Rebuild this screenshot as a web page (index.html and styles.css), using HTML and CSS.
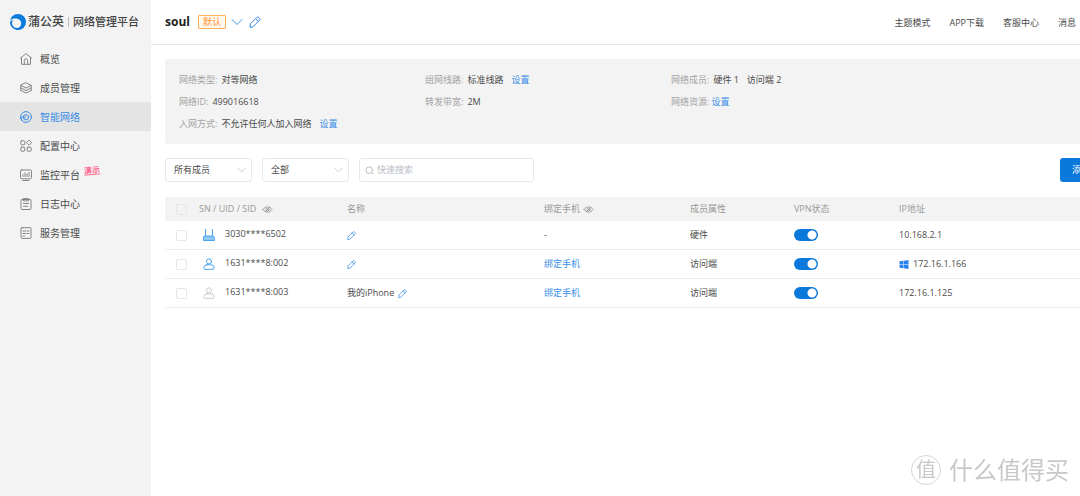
FILE: index.html
```html
<!DOCTYPE html>
<html lang="zh-CN">
<head>
<meta charset="utf-8">
<title>蒲公英 网络管理平台</title>
<link rel="stylesheet" href="styles.css">
</head>
<body>
<svg class="defs" width="0" height="0" aria-hidden="true">
  <symbol id="pencil" viewBox="0 0 12 12"><path d="M1 11l.4-3.200L7.700 1.500a1.500 1.500 0 0 1 2.200 0l.6.6a1.500 1.500 0 0 1 0 2.200L4.200 10.600zM6.700 2.500l2.800 2.800"/></symbol>
  <symbol id="chevron" viewBox="0 0 12 8"><path d="M1 1.500l5 5 5-5"/></symbol>
  <symbol id="user" viewBox="0 0 12 12"><circle cx="6" cy="3.400" r="2.600"/><path d="M3.900 6.800h4.200a3 3 0 0 1 3 3v.7a.8.8 0 0 1-.8.8H1.700a.8.8 0 0 1-.8-.8v-.7a3 3 0 0 1 3-3z"/></symbol>
  <symbol id="eye" viewBox="0 0 12 10"><path d="M1 5c2.500-4 7.500-4 10 0-2.500 4-7.500 4-10 0z"/><circle cx="6" cy="5" r="1.700"/><path d="M3.500 7.500l5-5"/></symbol>
</svg>
<div class="app">
  <aside class="sidebar">
    <div class="brand">
      <svg class="brand-mark" viewBox="0 0 16 16"><circle cx="8" cy="8" r="8" fill="#0c7bdc"/><path d="M0 6.500C1.500 4.800 4 4.300 6.500 4.500a5 5 0 0 1 4.700 5c0 2.800-2 4.700-4.700 4.500L5.500 16H0z" fill="#f3f3f3"/><path d="M.2 7.800c.7-1.300 2-1.800 3.300-1.500C2.200 7.200 1.700 8.800 2.200 10.500c.6 2 2.300 3.300 4.800 3.500l1 2C3.500 16-.5 12.300.2 7.800z" fill="#0c7bdc"/></svg>
      <span class="brand-name">蒲公英</span>
      <span class="brand-sub">网络管理平台</span>
    </div>
    <nav class="menu">
      <a href="#"><svg class="icon" viewBox="0 0 12 12"><path d="M.5 5L6 .7 11.500 5M1.500 4.500v6.800h9V4.500M4.300 11V7.500a1.700 1.700 0 0 1 3.400 0V11"/></svg>概览</a>
      <a href="#"><svg class="icon" viewBox="0 0 12 12"><path d="M6 .8l5.200 2.600L6 6 .8 3.400zM.8 5.900L6 8.500l5.200-2.600M.8 8.400L6 11l5.200-2.600M.8 3.400v5M11.200 3.400v5"/></svg>成员管理</a>
      <a href="#" class="active" aria-current="page"><svg class="icon" viewBox="0 0 12 12"><circle cx="6" cy="6" r="5.400"/><path d="M1.600 9.200C.9 7.500 1.500 5.600 3.300 5"/><circle cx="6" cy="6.300" r="2.600"/><path d="M3.600 7.500c.2-1 .9-1.500 1.900-1.500"/></svg>智能网络</a>
      <a href="#"><svg class="icon" viewBox="0 0 12 12"><rect x=".8" y=".8" width="4" height="4" rx=".8"/><path d="M9.200.4l2.400 2.400-2.400 2.400-2.400-2.400z"/><rect x=".8" y="7.200" width="4" height="4" rx=".8"/><rect x="7.200" y="7.200" width="4" height="4" rx=".8"/></svg>配置中心</a>
      <a href="#"><svg class="icon" viewBox="0 0 12 12"><rect x=".5" y="1" width="11" height="8.800" rx="1.200"/><path d="M3 7.500v-2M5 7.500V4M7 7.500V5M9 7.500V3.500M3 11.500h6"/></svg>监控平台<span class="demo">演示</span></a>
      <a href="#"><svg class="icon" viewBox="0 0 12 12"><rect x="1" y="1.500" width="10" height="10" rx="1"/><path d="M3.500.6h5v2.300h-5zM3.500 5.500h5M3.500 8.300h4"/></svg>日志中心</a>
      <a href="#"><svg class="icon" viewBox="0 0 12 12"><rect x="1" y=".7" width="10" height="10.700" rx="1"/><path d="M3 4h2.500M7 4h2M3 6.500h2.500M7 6.500h2M3 9h1.500"/></svg>服务管理</a>
    </nav>
  </aside>
  <div class="main">
    <header class="topbar">
      <h1>soul</h1>
      <span class="tag">默认</span>
      <button class="bare" aria-label="切换网络"><svg class="switcher" viewBox="0 0 12 8"><use href="#chevron"/></svg></button>
      <button class="bare" aria-label="编辑名称"><svg class="icon" viewBox="0 0 12 12"><use href="#pencil"/></svg></button>
      <nav class="links"><a href="#">主题模式</a><a href="#">APP下载</a><a href="#">客服中心</a><a href="#">消息</a></nav>
    </header>
    <main class="content">
      <dl class="summary">
        <div><dt>网络类型:</dt><dd>对等网络</dd></div>
        <div><dt>组网线路:</dt><dd>标准线路</dd><dd><a href="#">设置</a></dd></div>
        <div><dt>网络成员:</dt><dd>硬件 1</dd><dd>访问端 2</dd></div>
        <div><dt>网络ID:</dt><dd>499016618</dd></div>
        <div><dt>转发带宽:</dt><dd>2M</dd></div>
        <div class="tight"><dt>网络资源:</dt><dd><a href="#">设置</a></dd></div>
        <div><dt>入网方式:</dt><dd>不允许任何人加入网络</dd><dd><a href="#">设置</a></dd></div>
      </dl>
      <div class="filters">
        <div class="field pick"><select aria-label="成员"><option>所有成员</option></select><svg class="caret" viewBox="0 0 12 8"><use href="#chevron"/></svg></div>
        <div class="field pick"><select aria-label="状态"><option>全部</option></select><svg class="caret" viewBox="0 0 12 8"><use href="#chevron"/></svg></div>
        <div class="field search"><svg class="lens" viewBox="0 0 10 10"><circle cx="4.700" cy="4.700" r="3.700"/><path d="M7.400 7.400L9 9"/></svg><input type="text" aria-label="快速搜索" placeholder="快速搜索"></div>
        <button class="add">添加成员</button>
      </div>
      <table>
        <colgroup><col class="c-check"><col class="c-id"><col class="c-name"><col class="c-phone"><col class="c-attr"><col class="c-vpn"><col></colgroup>
        <thead>
          <tr><th><input type="checkbox" aria-label="全选"></th><th>SN / UID / SID <svg class="eye" viewBox="0 0 12 10"><use href="#eye"/></svg></th><th>名称</th><th>绑定手机<svg class="eye" viewBox="0 0 12 10"><use href="#eye"/></svg></th><th>成员属性</th><th>VPN状态</th><th>IP地址</th></tr>
        </thead>
        <tbody>
          <tr><td><input type="checkbox" aria-label="选择 3030****6502"></td><td><div class="device"><svg class="kind" viewBox="0 0 12 12"><path d="M2.500.3v7M9.500.3v7"/><path class="fill" d="M1.500 7h9l1.200 2.500v2H.3v-2z"/></svg><span>3030****6502</span></div></td><td><button class="bare" aria-label="编辑"><svg class="pen" viewBox="0 0 12 12"><use href="#pencil"/></svg></button></td><td>-</td><td>硬件</td><td><input type="checkbox" class="toggle" aria-label="VPN" checked></td><td>10.168.2.1</td></tr>
          <tr><td><input type="checkbox" aria-label="选择 1631****8:002"></td><td><div class="device"><svg class="kind" viewBox="0 0 12 12"><use href="#user"/></svg><span>1631****8:002</span></div></td><td><button class="bare" aria-label="编辑"><svg class="pen" viewBox="0 0 12 12"><use href="#pencil"/></svg></button></td><td><a href="#">绑定手机</a></td><td>访问端</td><td><input type="checkbox" class="toggle" aria-label="VPN" checked></td><td><div class="address"><svg class="win" viewBox="0 0 10 10"><path d="M0 1.400L4.500.8v3.900H0zM5 .7L10 0v4.700H5zM0 5.200h4.500v4L0 8.600zM5 5.200h5V10l-5-.7z"/></svg>172.16.1.166</div></td></tr>
          <tr><td><input type="checkbox" aria-label="选择 1631****8:003"></td><td><div class="device"><svg class="kind offline" viewBox="0 0 12 12"><use href="#user"/></svg><span>1631****8:003</span></div></td><td><div class="address">我的iPhone<button class="bare" aria-label="编辑"><svg class="pen" viewBox="0 0 12 12"><use href="#pencil"/></svg></button></div></td><td><a href="#">绑定手机</a></td><td>访问端</td><td><input type="checkbox" class="toggle" aria-label="VPN" checked></td><td>172.16.1.125</td></tr>
        </tbody>
      </table>
    </main>
  </div>
</div>
<div class="watermark"><span class="seal">值</span><span>什么值得买</span></div>
</body>
</html>
```
FILE: styles.css
```css
* { box-sizing: border-box; }
body {
  margin: 0;
  font-family: "Open Sans", "Noto Sans CJK SC", sans-serif;
  font-size: 9px;
  line-height: 14px;
  color: #4a4a4a;
  background: #fff;
}
a { color: #3a8ee6; text-decoration: none; }
svg { display: block; flex: none; fill: none; stroke: currentColor; stroke-linecap: round; stroke-linejoin: round; }
button, input, select { font: inherit; color: inherit; }
.defs { position: absolute; }
.app { display: flex; min-height: 100vh; }

.sidebar { flex: none; width: 151px; background: #f3f3f3; }
.brand { display: flex; align-items: center; height: 44px; padding-left: 10px; color: #444; }
.brand-mark { width: 16px; height: 16px; stroke: none; }
.brand-name { margin-left: 2px; font-size: 12px; font-weight: 500; }
.brand-sub { margin-left: 4px; padding-left: 4px; border-left: 1px solid #bbb; font-size: 11px; line-height: 10px; font-weight: 500; white-space: nowrap; }
.menu { display: flex; flex-direction: column; }
.menu a { display: flex; align-items: center; gap: 8px; height: 29px; padding-left: 20px; font-size: 10px; color: #4a4a4a; }
.menu .icon { color: #858585; }
.menu .active { background: #e4e4e4; color: #3a8ee6; }
.menu .active .icon { color: #3a8ee6; }
.icon { width: 12px; height: 12px; }
.demo { margin: 0 0 10px -4px; border-bottom: 1px solid #ff6f96; color: #ff5c8a; font-size: 8px; line-height: 9px; font-weight: 700; transform: rotate(-5deg); }

.main { flex: 1; min-width: 0; overflow: hidden; }
.topbar { display: flex; align-items: center; height: 45px; padding-left: 14px; border-bottom: 1px solid #e8e8e8; }
h1 { margin: 0 8px 0 0; font-size: 12px; font-weight: 700; color: #222; }
.tag { margin-right: 5px; padding: 0 4px; border: 1px solid #ffae5c; border-radius: 1px; background: #fff8ef; color: #ff922b; line-height: 12px; }
.bare { display: block; padding: 0; border: 0; background: none; color: #3a8ee6; }
.switcher { width: 12px; height: 8px; margin-right: 6px; }
.links { display: flex; gap: 19px; margin-left: auto; padding: 2px 4px 0 0; }
.links a { color: #4a4a4a; }

.content { padding: 14px 0 0 14px; }
.summary { display: grid; grid-template-columns: 246px 246px 1fr; row-gap: 8px; margin: 0; padding: 14px 14px 13px; border-radius: 3px 0 0 3px; background: #f3f3f3; }
.summary div { display: flex; gap: 8px; }
.summary dt { margin-right: -4px; color: #a3a3a3; }
.summary div.tight { gap: 6px; }
.summary dd { margin: 0; }

.filters { display: flex; gap: 10px; margin: 14px -40px 15px 0; }
.field { position: relative; display: flex; align-items: center; height: 24px; border: 1px solid #e8e8ec; border-radius: 3px; }
.pick { width: 87px; }
.pick select { width: 100%; height: 100%; padding: 0 8px; border: 0; appearance: none; background: none; }
.caret { position: absolute; right: 5px; width: 9px; height: 6px; color: #b9bec8; pointer-events: none; }
.search { width: 175px; padding-left: 5px; gap: 3px; }
.search input { width: 100%; min-width: 0; padding: 0; border: 0; background: none; outline: 0; }
.search input::placeholder { color: #b9bec8; opacity: 1; }
.lens { width: 9px; height: 9px; color: #b0b5c0; }
.add { width: 60px; height: 24px; margin-left: auto; padding: 0 11px; border: 0; border-radius: 3px; background: #0b79dc; color: #fff; white-space: nowrap; }

table { width: 100%; table-layout: fixed; border-collapse: separate; border-spacing: 0; }
.c-check { width: 34px; }
.c-id { width: 148px; }
.c-name { width: 197px; }
.c-phone { width: 146px; }
.c-attr { width: 104px; }
.c-vpn { width: 105px; }
th, td { padding: 0; text-align: left; font-weight: 400; vertical-align: middle; }
th { height: 24px; background: #f3f3f3; color: #999; }
td { height: 29px; border-bottom: 1px solid #ededed; }
td:first-child, th:first-child { padding-left: 11px; }
input[type="checkbox"] { display: block; appearance: none; width: 11px; height: 11px; margin: 0; border: 1px solid #e6e6ea; border-radius: 2px; }
input.toggle { width: 24px; height: 12px; border: 0; border-radius: 6px; background: radial-gradient(circle at 18px 6px, #fff 4px, #0b79dc 5px); }
.eye { display: inline-block; width: 11px; height: 9px; margin-left: 3px; vertical-align: -2px; }
.device, .address { display: flex; align-items: center; }
.device { gap: 10px; padding-left: 4px; }
.device span { padding-bottom: 2px; }
.kind { width: 12px; height: 12px; color: #4aa3ec; }
.kind.offline { color: #ccc; }
.fill { fill: #8fc8f5; }
.pen { width: 9px; height: 9px; }
.address { gap: 4px; }
.win { width: 10px; height: 9px; fill: #2a83ea; stroke: none; }

.watermark { position: fixed; right: 11px; bottom: 11px; display: flex; align-items: center; gap: 8px; color: #c8c8c8; font-size: 24px; line-height: 30px; }
.seal { width: 30px; height: 30px; border: 1px solid #d4d4d4; border-radius: 50%; font-size: 20px; line-height: 27px; text-align: center; }
```
